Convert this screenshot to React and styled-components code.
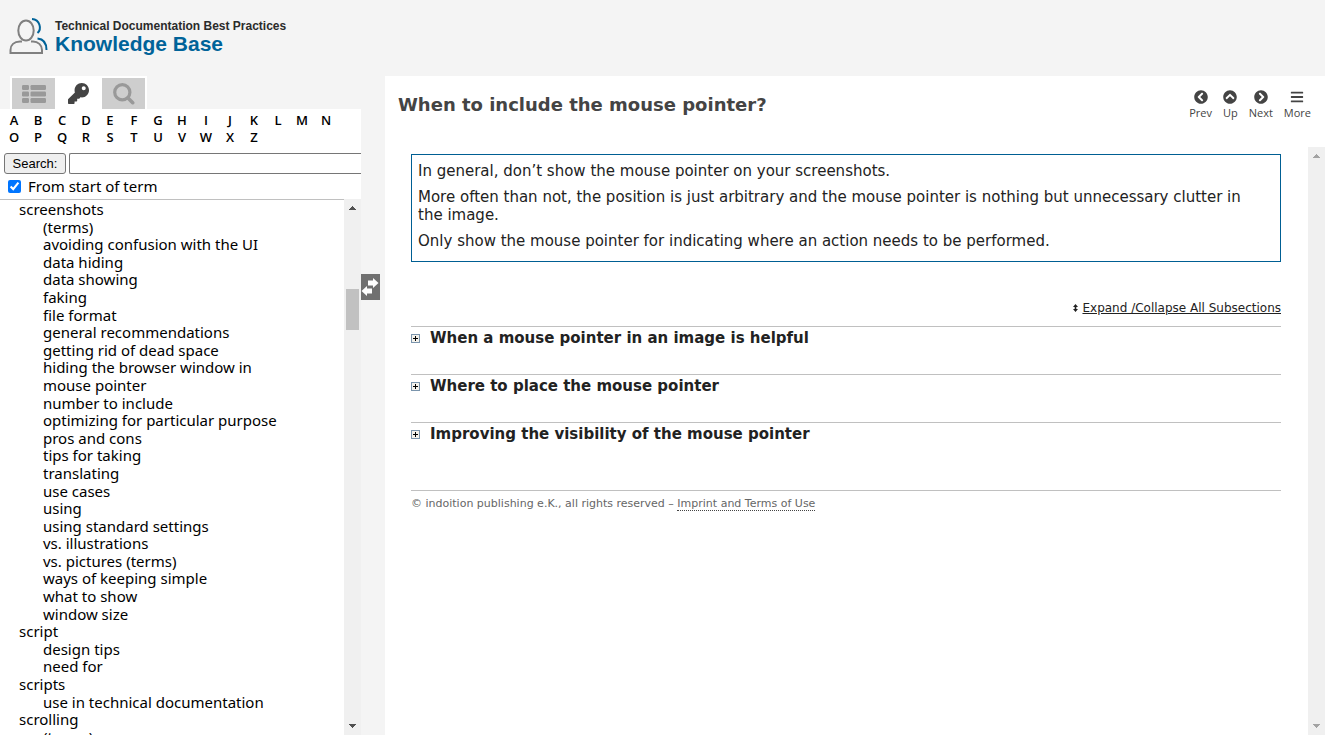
import React, { useState } from "react";
import styled, { createGlobalStyle } from "styled-components";
import {
  FaKey,
  FaChevronCircleLeft,
  FaChevronCircleUp,
  FaChevronCircleRight,
  FaBars,
} from "react-icons/fa";

const humanist = '"Noto Sans", sans-serif';
const label = '"Open Sans", "Noto Sans", sans-serif';
const wide = '"DejaVu Sans", Verdana, sans-serif';
const plain = '"Liberation Sans", Arial, sans-serif';

const GlobalStyle = createGlobalStyle`
  *, *::before, *::after { box-sizing: border-box; }
  body { margin: 0; background: #f4f4f4; color: #222; font-family: ${wide}; }
  button { font: inherit; color: inherit; cursor: pointer; }
`;

const Page = styled.div`
  display: flex;
  flex-direction: column;
  height: 100vh;
  overflow: hidden;
`;

const Header = styled.header`
  display: flex;
  align-items: flex-start;
  gap: 7px;
  flex: none;
  height: 76px;
  padding: 17px 9px 0;
  font-family: ${plain};
  font-weight: bold;
`;

const Brand = styled.div`
  display: flex;
  flex-direction: column;
  padding-top: 2px;
`;

const Tagline = styled.span`
  font-size: 12px;
  line-height: 14px;
  color: #2b2b2b;
`;

const BrandName = styled.span`
  font-size: 21px;
  line-height: 22px;
  color: #006399;
`;

const Body = styled.div`
  display: flex;
  flex: 1;
  min-height: 0;
`;

const Sidebar = styled.aside`
  display: flex;
  flex-direction: column;
  flex: none;
  width: 361px;
  overflow: hidden;
  font-family: ${humanist};
  color: #000;
`;

const Tabs = styled.div`
  display: flex;
  gap: 2px;
  align-self: flex-start;
  flex: none;
  margin-left: 10px;
  padding: 2px 2px 0;
  background: #fff;
`;

const Tab = styled.button`
  display: flex;
  align-items: center;
  justify-content: center;
  width: 43px;
  height: 31px;
  padding: 0;
  border: 0;
  background: ${(p) => (p.$active ? "#fff" : "#cecece")};
  color: ${(p) => (p.$active ? "#444" : "#999")};
  font-size: 21px;
`;

const Panel = styled.div`
  display: flex;
  flex-direction: column;
  flex: 1;
  min-height: 0;
  background: #fff;
`;

const Letters = styled.nav`
  display: grid;
  grid-template-columns: repeat(14, 24px);
  padding: 3px 0 0 2px;
  margin-bottom: 7px;
`;

const Letter = styled.a`
  color: #000;
  font-family: ${label};
  font-size: 13px;
  font-weight: 600;
  line-height: 17px;
  text-align: center;
  text-decoration: none;
`;

const SearchRow = styled.form`
  display: flex;
  gap: 3px;
  padding-left: 4px;
`;

const SearchButton = styled.button`
  flex: none;
  width: 62px;
  height: 21px;
  padding: 0;
  border: 1px solid #767676;
  border-radius: 3px;
  background: #efefef;
  font-family: ${plain};
  font-size: 13px;
  line-height: 19px;
`;

const SearchInput = styled.input`
  flex: 1;
  height: 21px;
  border: 1px solid #767676;
  border-right: 0;
  border-radius: 2px 0 0 2px;
  font-family: ${plain};
  font-size: 13px;
`;

const CheckRow = styled.label`
  display: flex;
  align-items: center;
  gap: 7px;
  height: 25px;
  padding: 0 0 1px 8px;
  font-size: 15px;
  line-height: 20px;
`;

const Check = styled.input`
  width: 13px;
  height: 13px;
  margin: 0;
  accent-color: #0075ff;
`;

const Scroller = styled.div`
  display: flex;
  flex: 1;
  min-height: 0;
`;

const TermList = styled.ul`
  flex: 1;
  margin: 0;
  padding: 1px 0 0 19px;
  overflow: hidden;
  border-top: 1px solid #c0c0c0;
  list-style: none;
  font-size: 16px;
  line-height: 110%;
`;

const Term = styled.li`
  font-size: 15px;
`;

const SubList = styled.ul`
  margin: 0;
  padding: 0 0 0 24px;
  list-style: none;
`;

const TermLink = styled.a`
  color: #000;
  text-decoration: none;
`;

const Track = styled.div`
  display: flex;
  flex-direction: column;
  align-items: center;
  justify-content: space-between;
  flex: none;
  width: 17px;
  padding: 7px 0;
  background: #f0f0f0;
`;

const Spacer = styled.div`
  flex: ${(p) => p.$grow};
`;

const Thumb = styled.div`
  width: 13px;
  height: 41px;
  background: #c1c1c1;
`;

const Divider = styled.div`
  flex: none;
  width: 24px;
  padding-top: 198px;
`;

const SwapButton = styled.button`
  display: block;
  width: 19px;
  height: 26px;
  padding: 0;
  border: 0;
  background: #707070;
`;

const Main = styled.main`
  display: flex;
  flex-direction: column;
  flex: 1;
  min-width: 0;
  background: #fff;
`;

const TitleBar = styled.div`
  display: flex;
  justify-content: space-between;
  flex: none;
  height: 71px;
  padding: 14px 14px 0 13px;
  color: #444;
`;

const Title = styled.h1`
  margin: 0;
  font-size: 18px;
  line-height: 30px;
`;

const Tools = styled.nav`
  display: flex;
  align-items: flex-start;
  gap: 11px;
`;

const Tool = styled.a`
  display: flex;
  flex-direction: column;
  align-items: center;
  color: #444;
  font-family: ${label};
  font-size: 11px;
  line-height: 18px;
  text-decoration: none;

  svg { width: 14px; height: 14px; }
`;

const Article = styled.article`
  flex: 1;
  min-width: 0;
  padding: 7px 27px 0 26px;
`;

const Note = styled.div`
  display: flex;
  flex-direction: column;
  gap: 8px;
  padding: 7px 18px 11px 6px;
  border: 1px solid #005f93;
  font-size: 15px;
  line-height: 18px;
`;

const Para = styled.p`
  margin: 0;
`;

const ExpandRow = styled.div`
  display: flex;
  align-items: center;
  justify-content: flex-end;
  gap: 4px;
  margin: 37px 0 9px;
  font-size: 12px;
  line-height: 18px;
`;

const ExpandLink = styled.a`
  color: #222;
`;

const Section = styled.section`
  height: 48px;
  border-top: 1px solid #c0c0c0;
`;

const SectionHeading = styled.h2`
  margin: 0;
  font-size: 15px;
  line-height: 22px;
`;

const SectionButton = styled.button`
  display: flex;
  align-items: center;
  gap: 10px;
  padding: 0;
  border: 0;
  background: none;
`;

const Footer = styled.footer`
  margin-top: 20px;
  padding-top: 4px;
  border-top: 1px solid #c0c0c0;
  color: #666;
  font-size: 11px;
  line-height: 18px;
`;

const FooterLink = styled.a`
  color: #666;
  text-decoration: none;
  border-bottom: 1px dotted #444;
`;

const terms = [
  {
    name: "screenshots",
    subs: [
      "(terms)",
      "avoiding confusion with the UI",
      "data hiding",
      "data showing",
      "faking",
      "file format",
      "general recommendations",
      "getting rid of dead space",
      "hiding the browser window in",
      "mouse pointer",
      "number to include",
      "optimizing for particular purpose",
      "pros and cons",
      "tips for taking",
      "translating",
      "use cases",
      "using",
      "using standard settings",
      "vs. illustrations",
      "vs. pictures (terms)",
      "ways of keeping simple",
      "what to show",
      "window size",
    ],
  },
  { name: "script", subs: ["design tips", "need for"] },
  { name: "scripts", subs: ["use in technical documentation"] },
  { name: "scrolling", subs: ["(terms)"] },
];

const sections = [
  "When a mouse pointer in an image is helpful",
  "Where to place the mouse pointer",
  "Improving the visibility of the mouse pointer",
];

const Logo = () => (
  <svg width="39" height="38" viewBox="0 0 39 38" fill="none" strokeWidth="2" aria-hidden="true">
    <g stroke="#808080">
      <ellipse cx="17" cy="13.5" rx="7.7" ry="10" />
      <path d="M13 24.500H11C5 24.500 1.500 28 1.500 33V36H33V33C33 28 29 24.500 24 24.500H22" />
    </g>
    <path stroke="#006399" d="M23 2C31 2.500 33 12 28.500 16M28.500 21.500C34 22 37.500 26 37.500 33" />
  </svg>
);

const ListIcon = () => (
  <svg width="24" height="18" viewBox="0 0 24 18" fill="currentColor" aria-hidden="true">
    {[0, 6.5, 13].map((y) => (
      <g key={y}>
        <rect x="0" y={y} width="7" height="5" rx="1.2" />
        <rect x="8.5" y={y} width="15.5" height="5" rx="1.2" />
      </g>
    ))}
  </svg>
);

const SearchIcon = () => (
  <svg width="22" height="22" viewBox="0 0 22 22" fill="none" stroke="currentColor" aria-hidden="true">
    <circle cx="9.3" cy="9.3" r="7.600" strokeWidth="3.200" />
    <path d="M15 15L19.700 19.700" strokeWidth="3.600" strokeLinecap="round" />
  </svg>
);

const Arrow = ({ down, color }) => (
  <svg width="7" height="4" viewBox="0 0 7 4" shapeRendering="crispEdges" aria-hidden="true">
    <path fill={color} d={down ? "M0 0H7V1H6V2H5V3H4V4H3V3H2V2H1V1H0Z" : "M3 0H4V1H5V2H6V3H7V4H0V3H1V2H2V1H3Z"} />
  </svg>
);

const PlusBox = () => (
  <svg width="9" height="9" viewBox="0 0 9 9" shapeRendering="crispEdges" aria-hidden="true">
    <rect x="0.500" y="0.500" width="8" height="8" fill="#f4f2ec" stroke="#7b95ad" />
    <path d="M2 4.500H7M4.500 2V7" stroke="#000" />
  </svg>
);

const SwapIcon = () => (
  <svg width="19" height="26" viewBox="0 0 19 26" aria-hidden="true">
    <path fill="#fff" d="M7 6.500H12V4L17.500 9L12 14V11.500H7ZM11 14.500H6V12L0.500 17L6 22V19.500H11Z" />
  </svg>
);

const UpDownIcon = () => (
  <svg width="5" height="8" viewBox="0 0 5 8" aria-hidden="true">
    <path fill="#222" d="M2.500 0L5 3H3.300V5H5L2.500 8L0 5H1.700V3H0Z" />
  </svg>
);

export default function App() {
  const [fromStart, setFromStart] = useState(true);
  return (
    <Page>
      <GlobalStyle />
      <Header>
        <Logo />
        <Brand>
          <Tagline>Technical Documentation Best Practices</Tagline>
          <BrandName>Knowledge Base</BrandName>
        </Brand>
      </Header>
      <Body>
        <Sidebar>
          <Tabs>
            <Tab aria-label="Contents"><ListIcon /></Tab>
            <Tab $active aria-label="Index"><FaKey /></Tab>
            <Tab aria-label="Search"><SearchIcon /></Tab>
          </Tabs>
          <Panel>
            <Letters>
              {"ABCDEFGHIJKLMNOPQRSTUVWXZ".split("").map((l) => (
                <Letter key={l} href={"#" + l}>{l}</Letter>
              ))}
            </Letters>
            <SearchRow onSubmit={(e) => e.preventDefault()}>
              <SearchButton type="submit">Search:</SearchButton>
              <SearchInput type="text" aria-label="Search term" />
            </SearchRow>
            <CheckRow>
              <Check type="checkbox" checked={fromStart} onChange={(e) => setFromStart(e.target.checked)} />
              From start of term
            </CheckRow>
            <Scroller>
              <TermList>
                {terms.map((t) => (
                  <Term key={t.name}>
                    <TermLink href="#term">{t.name}</TermLink>
                    <SubList>
                      {t.subs.map((s) => (
                        <li key={s}><TermLink href="#term">{s}</TermLink></li>
                      ))}
                    </SubList>
                  </Term>
                ))}
              </TermList>
              <Track>
                <Arrow color="#505050" />
                <Spacer $grow={16} />
                <Thumb />
                <Spacer $grow={80} />
                <Arrow down color="#505050" />
              </Track>
            </Scroller>
          </Panel>
        </Sidebar>
        <Divider>
          <SwapButton aria-label="Toggle navigation"><SwapIcon /></SwapButton>
        </Divider>
        <Main>
          <TitleBar>
            <Title>When to include the mouse pointer?</Title>
            <Tools>
              <Tool href="#prev"><FaChevronCircleLeft />Prev</Tool>
              <Tool href="#up"><FaChevronCircleUp />Up</Tool>
              <Tool href="#next"><FaChevronCircleRight />Next</Tool>
              <Tool href="#more"><FaBars />More</Tool>
            </Tools>
          </TitleBar>
          <Scroller>
            <Article>
              <Note>
                <Para>In general, don’t show the mouse pointer on your screenshots.</Para>
                <Para>
                  More often than not, the position is just arbitrary and the mouse pointer is nothing but unnecessary
                  clutter in the image.
                </Para>
                <Para>Only show the mouse pointer for indicating where an action needs to be performed.</Para>
              </Note>
              <ExpandRow>
                <UpDownIcon />
                <ExpandLink href="#all">Expand /Collapse All Subsections</ExpandLink>
              </ExpandRow>
              {sections.map((s) => (
                <Section key={s}>
                  <SectionHeading>
                    <SectionButton><PlusBox />{s}</SectionButton>
                  </SectionHeading>
                </Section>
              ))}
              <Footer>
                © indoition publishing e.K., all rights reserved – <FooterLink href="#imprint">Imprint and Terms of Use</FooterLink>
              </Footer>
            </Article>
            <Track>
              <Arrow color="#a3a3a3" />
              <Arrow down color="#a3a3a3" />
            </Track>
          </Scroller>
        </Main>
      </Body>
    </Page>
  );
}
